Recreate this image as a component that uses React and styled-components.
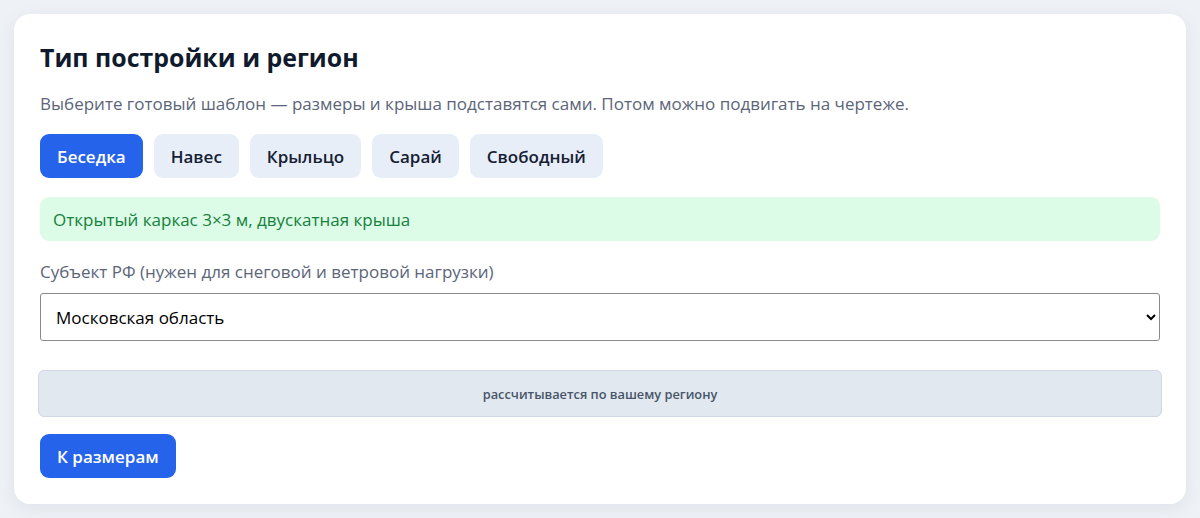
import { useState } from "react"
import styled, { createGlobalStyle } from "styled-components"

const GlobalStyle = createGlobalStyle`
    * { box-sizing: border-box; }
    body {
        margin: 0;
        background: #eef1f6;
        font-family: "Open Sans", "Noto Sans", Arial, sans-serif;
    }
`

const templates = [
    { name: "Беседка", note: "Открытый каркас 3×3 м, двускатная крыша" },
    { name: "Навес", note: "Навес на столбах, односкатная крыша" },
    { name: "Крыльцо", note: "Крыльцо с козырьком" },
    { name: "Сарай", note: "Закрытый сарай, односкатная крыша" },
    { name: "Свободный", note: "Свободная конструкция" },
]

const App = () => {
    const [active, setActive] = useState(0)

    return (
        <Page>
            <GlobalStyle />
            <Card>
                <Title>Тип постройки и регион</Title>
                <Lead>Выберите готовый шаблон — размеры и крыша подставятся сами. Потом можно подвигать на чертеже.</Lead>

                <Chips>
                    {templates.map((t, i) => (
                        <Chip key={t.name} $active={i === active} onClick={() => setActive(i)}>
                            {t.name}
                        </Chip>
                    ))}
                </Chips>

                <Note>{templates[active].note}</Note>

                <Label htmlFor="region">Субъект РФ (нужен для снеговой и ветровой нагрузки)</Label>
                <Select id="region" defaultValue="msk">
                    <option value="msk">Московская область</option>
                    <option value="spb">Ленинградская область</option>
                    <option value="krd">Краснодарский край</option>
                </Select>

                <Strip>рассчитывается по вашему региону</Strip>

                <Primary>К размерам</Primary>
            </Card>
        </Page>
    )
}

export default App

const Page = styled.div`
    padding: 14px;
`

const Card = styled.div`
    background: #ffffff;
    border-radius: 16px;
    padding: 26px 26px 26px;
    box-shadow: 0 4px 18px rgba(30, 41, 59, 0.07);
    display: flex;
    flex-direction: column;
    align-items: flex-start;
`

const Title = styled.h1`
    margin: 0;
    font-size: 24.9px;
    line-height: 34px;
    font-weight: 700;
    color: #0f1b2d;
`

const Lead = styled.p`
    margin: 18px 0 0;
    font-size: 17px;
    line-height: 24px;
    color: #5b6579;
`

const Chips = styled.div`
    margin-top: 18px;
    display: flex;
    gap: 11px;
`

const Chip = styled.button`
    height: 44px;
    padding: 0 17px;
    border: none;
    border-radius: 9px;
    font-family: inherit;
    font-size: 17px;
    font-weight: 600;
    cursor: pointer;
    background: ${(p) => (p.$active ? "#2563eb" : "#e8eef8")};
    color: ${(p) => (p.$active ? "#ffffff" : "#162033")};
`

const Note = styled.div`
    margin-top: 19px;
    align-self: stretch;
    height: 44px;
    display: flex;
    align-items: center;
    padding: 0 13px;
    border-radius: 9px;
    background: #dcfce7;
    color: #16803c;
    font-size: 17px;
`

const Label = styled.label`
    margin-top: 19px;
    font-size: 17px;
    line-height: 24px;
    color: #5b6579;
`

const Select = styled.select`
    margin-top: 9px;
    align-self: stretch;
    height: 48px;
    padding: 0 10px 0 11px;
    border: 1px solid #8a8a8a;
    border-radius: 3px;
    background: #ffffff;
    font-family: inherit;
    font-size: 17px;
    color: #000000;
`

const Strip = styled.div`
    margin: 29px -2px 0;
    align-self: stretch;
    height: 47px;
    display: flex;
    align-items: center;
    justify-content: center;
    background: #e2e8f0;
    border: 1px solid #cfd8e3;
    border-radius: 6px;
    color: #475569;
    font-size: 12.8px;
    font-weight: 600;
`

const Primary = styled.button`
    margin-top: 17px;
    height: 44px;
    padding: 0 17px;
    border: none;
    border-radius: 9px;
    background: #2563eb;
    color: #ffffff;
    font-family: inherit;
    font-size: 17px;
    font-weight: 600;
    cursor: pointer;
`
